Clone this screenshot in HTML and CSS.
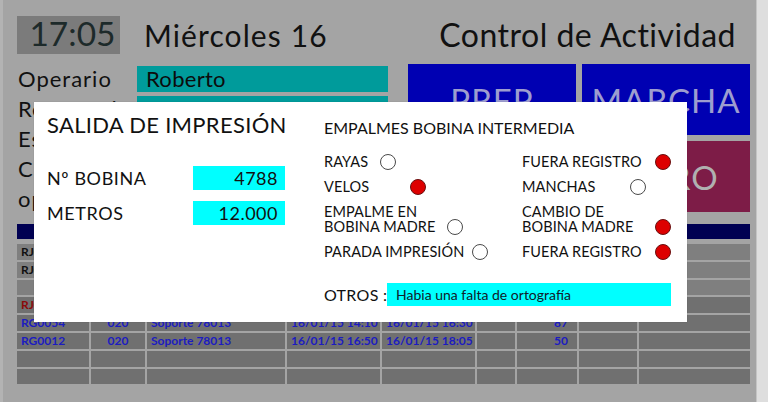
FILE: index.html
```html
<!DOCTYPE html>
<html lang="es">
<head>
<meta charset="utf-8">
<title>Control de Actividad</title>
<link rel="stylesheet" href="styles.css">
</head>
<body>
<div class="screen">
  <header class="top">
    <div class="clock">17:05</div>
    <div class="date">Miércoles 16</div>
    <div class="title">Control de Actividad</div>
  </header>

  <section class="middle">
    <div class="info">
      <div class="info-row"><span class="info-label">Operario</span><span class="info-field">Roberto</span></div>
      <div class="info-row"><span class="info-label">Referencia</span><span class="info-field">TR - 010</span></div>
      <div class="info-row"><span class="info-label">Estado</span><span class="info-field"></span></div>
      <div class="info-row"><span class="info-label">Cliente</span><span class="info-field"></span></div>
      <div class="info-row"><span class="info-label">operación</span><span class="info-field"></span></div>
    </div>
    <div class="buttons">
      <div class="btn btn-blue">PREP</div>
      <div class="btn btn-blue">MARCHA</div>
      <div class="btn btn-blue"></div>
      <div class="btn btn-stop">PARO</div>
    </div>
  </section>

  <div class="table-head"></div>
  <div class="table">
    <div class="trow light t-black"><div class="c">RJ0031</div><div class="c"></div><div class="c"></div><div class="c"></div><div class="c"></div><div class="c"></div><div class="c"></div><div class="c"></div><div class="c"></div></div>
    <div class="trow light t-black"><div class="c">RJ0032</div><div class="c"></div><div class="c"></div><div class="c"></div><div class="c"></div><div class="c"></div><div class="c"></div><div class="c"></div><div class="c"></div></div>
    <div class="trow light"><div class="c"></div><div class="c"></div><div class="c"></div><div class="c"></div><div class="c"></div><div class="c"></div><div class="c"></div><div class="c"></div><div class="c"></div></div>
    <div class="trow t-red"><div class="c">RJ0040</div><div class="c"></div><div class="c"></div><div class="c"></div><div class="c"></div><div class="c"></div><div class="c"></div><div class="c"></div><div class="c"></div></div>
    <div class="trow t-blue"><div class="c">RG0054</div><div class="c ctr">020</div><div class="c">Soporte 78013</div><div class="c">16/01/15 14:10</div><div class="c">16/01/15 16:30</div><div class="c"></div><div class="c num">87</div><div class="c"></div><div class="c"></div></div>
    <div class="trow t-blue"><div class="c">RG0012</div><div class="c ctr">020</div><div class="c">Soporte 78013</div><div class="c">16/01/15 16:50</div><div class="c">16/01/15 18:05</div><div class="c"></div><div class="c num">50</div><div class="c"></div><div class="c"></div></div>
    <div class="trow"><div class="c"></div><div class="c"></div><div class="c"></div><div class="c"></div><div class="c"></div><div class="c"></div><div class="c"></div><div class="c"></div><div class="c"></div></div>
    <div class="trow"><div class="c"></div><div class="c"></div><div class="c"></div><div class="c"></div><div class="c"></div><div class="c"></div><div class="c"></div><div class="c"></div><div class="c"></div></div>
  </div>

  <div class="modal">
    <div class="m-left">
      <h2 class="m-title">SALIDA DE IMPRESIÓN</h2>
      <div class="fields">
        <div class="field"><span class="field-label">Nº BOBINA</span><span class="field-value">4788</span></div>
        <div class="field"><span class="field-label">METROS</span><span class="field-value">12.000</span></div>
      </div>
    </div>
    <div class="m-right">
      <h3 class="m-sub">EMPALMES BOBINA INTERMEDIA</h3>
      <div class="opts">
        <div class="opt"><span class="opt-label w-rayas">RAYAS</span><span class="dot"></span></div>
        <div class="opt opt-r"><span class="opt-label">FUERA REGISTRO</span><span class="dot on"></span></div>
        <div class="opt"><span class="opt-label w-velos">VELOS</span><span class="dot on"></span></div>
        <div class="opt opt-r"><span class="opt-label">MANCHAS</span><span class="dot shift"></span></div>
        <div class="opt"><span class="opt-label w-empalme"><span class="ln">EMPALME EN</span><span class="ln">BOBINA MADRE</span></span><span class="dot"></span></div>
        <div class="opt opt-r"><span class="opt-label"><span class="ln">CAMBIO DE</span><span class="ln">BOBINA MADRE</span></span><span class="dot on"></span></div>
        <div class="opt"><span class="opt-label w-parada">PARADA IMPRESIÓN</span><span class="dot"></span></div>
        <div class="opt opt-r"><span class="opt-label">FUERA REGISTRO</span><span class="dot on"></span></div>
      </div>
      <div class="otros">
        <span class="otros-label">OTROS :</span>
        <span class="otros-box">Habia una falta de ortografía</span>
      </div>
    </div>
  </div>
</div>
</body>
</html>
```

FILE: styles.css
```css
html, body {
  margin: 0;
  padding: 0;
}
body {
  background: #dedede;
  font-family: Lato, "Liberation Sans", sans-serif;
  width: 768px;
  height: 402px;
  overflow: hidden;
}
.screen {
  position: relative;
  box-sizing: border-box;
  width: 757px;
  height: 402px;
  background: #a4a4a4;
  border-left: 3px solid #b3b3b3;
  border-right: 1px solid #c4c4c4;
  padding: 16px 6px 0 14px;
}

/* header */
.top {
  display: flex;
  align-items: flex-start;
  height: 38px;
}
.clock {
  width: 103px;
  height: 38px;
  background: #7b7b7b;
  color: #1d2a2a;
  font-size: 33.5px;
  line-height: 34px;
  text-align: center;
  padding-left: 8px;
  box-sizing: border-box;
}
.date {
  margin-left: 24px;
  font-size: 30px;
  line-height: 38px;
  color: #111;
  letter-spacing: 1.1px;
}
.title {
  margin-left: auto;
  margin-right: 14px;
  font-size: 32px;
  line-height: 38px;
  color: #111;
  letter-spacing: 0.5px;
}

/* middle */
.middle {
  display: grid;
  grid-template-columns: 371px 342px;
  column-gap: 20px;
  margin-top: 10px;
  height: 148px;
}
.info {
  padding-top: 2px;
  display: flex;
  flex-direction: column;
  gap: 4px;
}
.info-row {
  display: flex;
  height: 26px;
}
.info-label {
  width: 119px;
  font-size: 22px;
  line-height: 26px;
  color: #111;
  padding-left: 1px;
  letter-spacing: 1px;
  white-space: nowrap;
  overflow: hidden;
}
.info-field {
  flex: 1;
  background: #009b9b;
  font-size: 22px;
  line-height: 26px;
  color: #0c0c0c;
  padding-left: 9px;
  letter-spacing: 0.3px;
}
.buttons {
  display: grid;
  grid-template-columns: 168px 168px;
  grid-template-rows: 71px 71px;
  gap: 6px;
}
.btn {
  display: flex;
  align-items: center;
  justify-content: center;
  font-size: 33px;
  letter-spacing: 1px;
}
.btn-blue {
  background: #0000b2;
  color: #9d9dcf;
}
.btn-stop {
  background: #7d1c47;
  color: #b0b0b0;
  padding-left: 14px;
}

/* table */
.table-head {
  margin-top: 12px;
  height: 15px;
  background: #000052;
}
.table {
  margin-top: 5px;
  display: flex;
  flex-direction: column;
  gap: 2px;
}
.trow {
  display: grid;
  grid-template-columns: 72px 54px 138px 93px 93px 38px 60px 58px 111px;
  column-gap: 2px;
  height: 15.8px;
}
.c {
  background: #707070;
  font-size: 12px;
  font-weight: 700;
  line-height: 16px;
  padding-left: 4px;
  white-space: nowrap;
  overflow: hidden;
}
.trow.light .c {
  background: #7f7f7f;
}
.c.ctr {
  text-align: center;
  padding-left: 0;
}
.c.num {
  text-align: right;
  padding-right: 9px;
}
.t-black .c { color: #111; }
.t-red .c { color: #8a0a0a; }
.t-blue .c { color: #1c1cc0; }

/* modal */
.modal {
  position: absolute;
  left: 31px;
  top: 102px;
  width: 653px;
  height: 220px;
  box-sizing: border-box;
  background: #fff;
  box-shadow: 0 0 1px rgba(0,0,0,0.2);
  padding: 9px 16px 0 13px;
  display: grid;
  grid-template-columns: 238px 1fr;
  column-gap: 39px;
  color: #111;
}
.m-title {
  margin: 0;
  font-size: 22px;
  font-weight: 400;
  line-height: 28px;
  letter-spacing: 0.3px;
  white-space: nowrap;
}
.fields {
  margin-top: 27px;
  display: flex;
  flex-direction: column;
  gap: 11px;
}
.field {
  display: flex;
  align-items: center;
  height: 24px;
}
.field-label {
  width: 146px;
  font-size: 18px;
  letter-spacing: 0.6px;
}
.field-value {
  width: 92px;
  height: 24px;
  background: #00ffff;
  text-align: right;
  padding-right: 7px;
  box-sizing: border-box;
  font-size: 18px;
  line-height: 24px;
  letter-spacing: 0.5px;
}
.m-sub {
  margin: 9px 0 0;
  font-size: 16px;
  font-weight: 400;
  line-height: 16px;
  letter-spacing: 0;
  white-space: nowrap;
}
.opts {
  margin-top: 18px;
  display: grid;
  grid-template-columns: 198px 149px;
  row-gap: 10px;
  font-size: 14.5px;
  line-height: 15px;
}
.opt {
  display: flex;
  align-items: flex-end;
}
.opt-r {
  justify-content: space-between;
}
.opt-label {
  white-space: nowrap;
  letter-spacing: 0.1px;
}
.ln {
  display: block;
  height: 15px;
}
.w-rayas { width: 56px; }
.w-velos { width: 86px; }
.w-empalme { width: 123px; }
.w-parada { width: 148px; }
.dot {
  width: 16px;
  height: 16px;
  box-sizing: border-box;
  border-radius: 50%;
  border: 1px solid #4a4a4a;
  background: #fff;
  margin-bottom: -1px;
  flex: none;
}
.dot.on {
  background: #dd0000;
  border-color: #6a1010;
}
.dot.shift {
  margin-right: 25px;
}
.otros {
  margin-top: 24px;
  display: flex;
  align-items: center;
}
.otros-label {
  font-size: 16px;
  letter-spacing: 0.3px;
  white-space: nowrap;
  width: 63px;
}
.otros-box {
  width: 284px;
  height: 23px;
  box-sizing: border-box;
  background: #00ffff;
  padding-left: 9px;
  font-size: 14px;
  line-height: 23px;
  color: #10202a;
}
```
